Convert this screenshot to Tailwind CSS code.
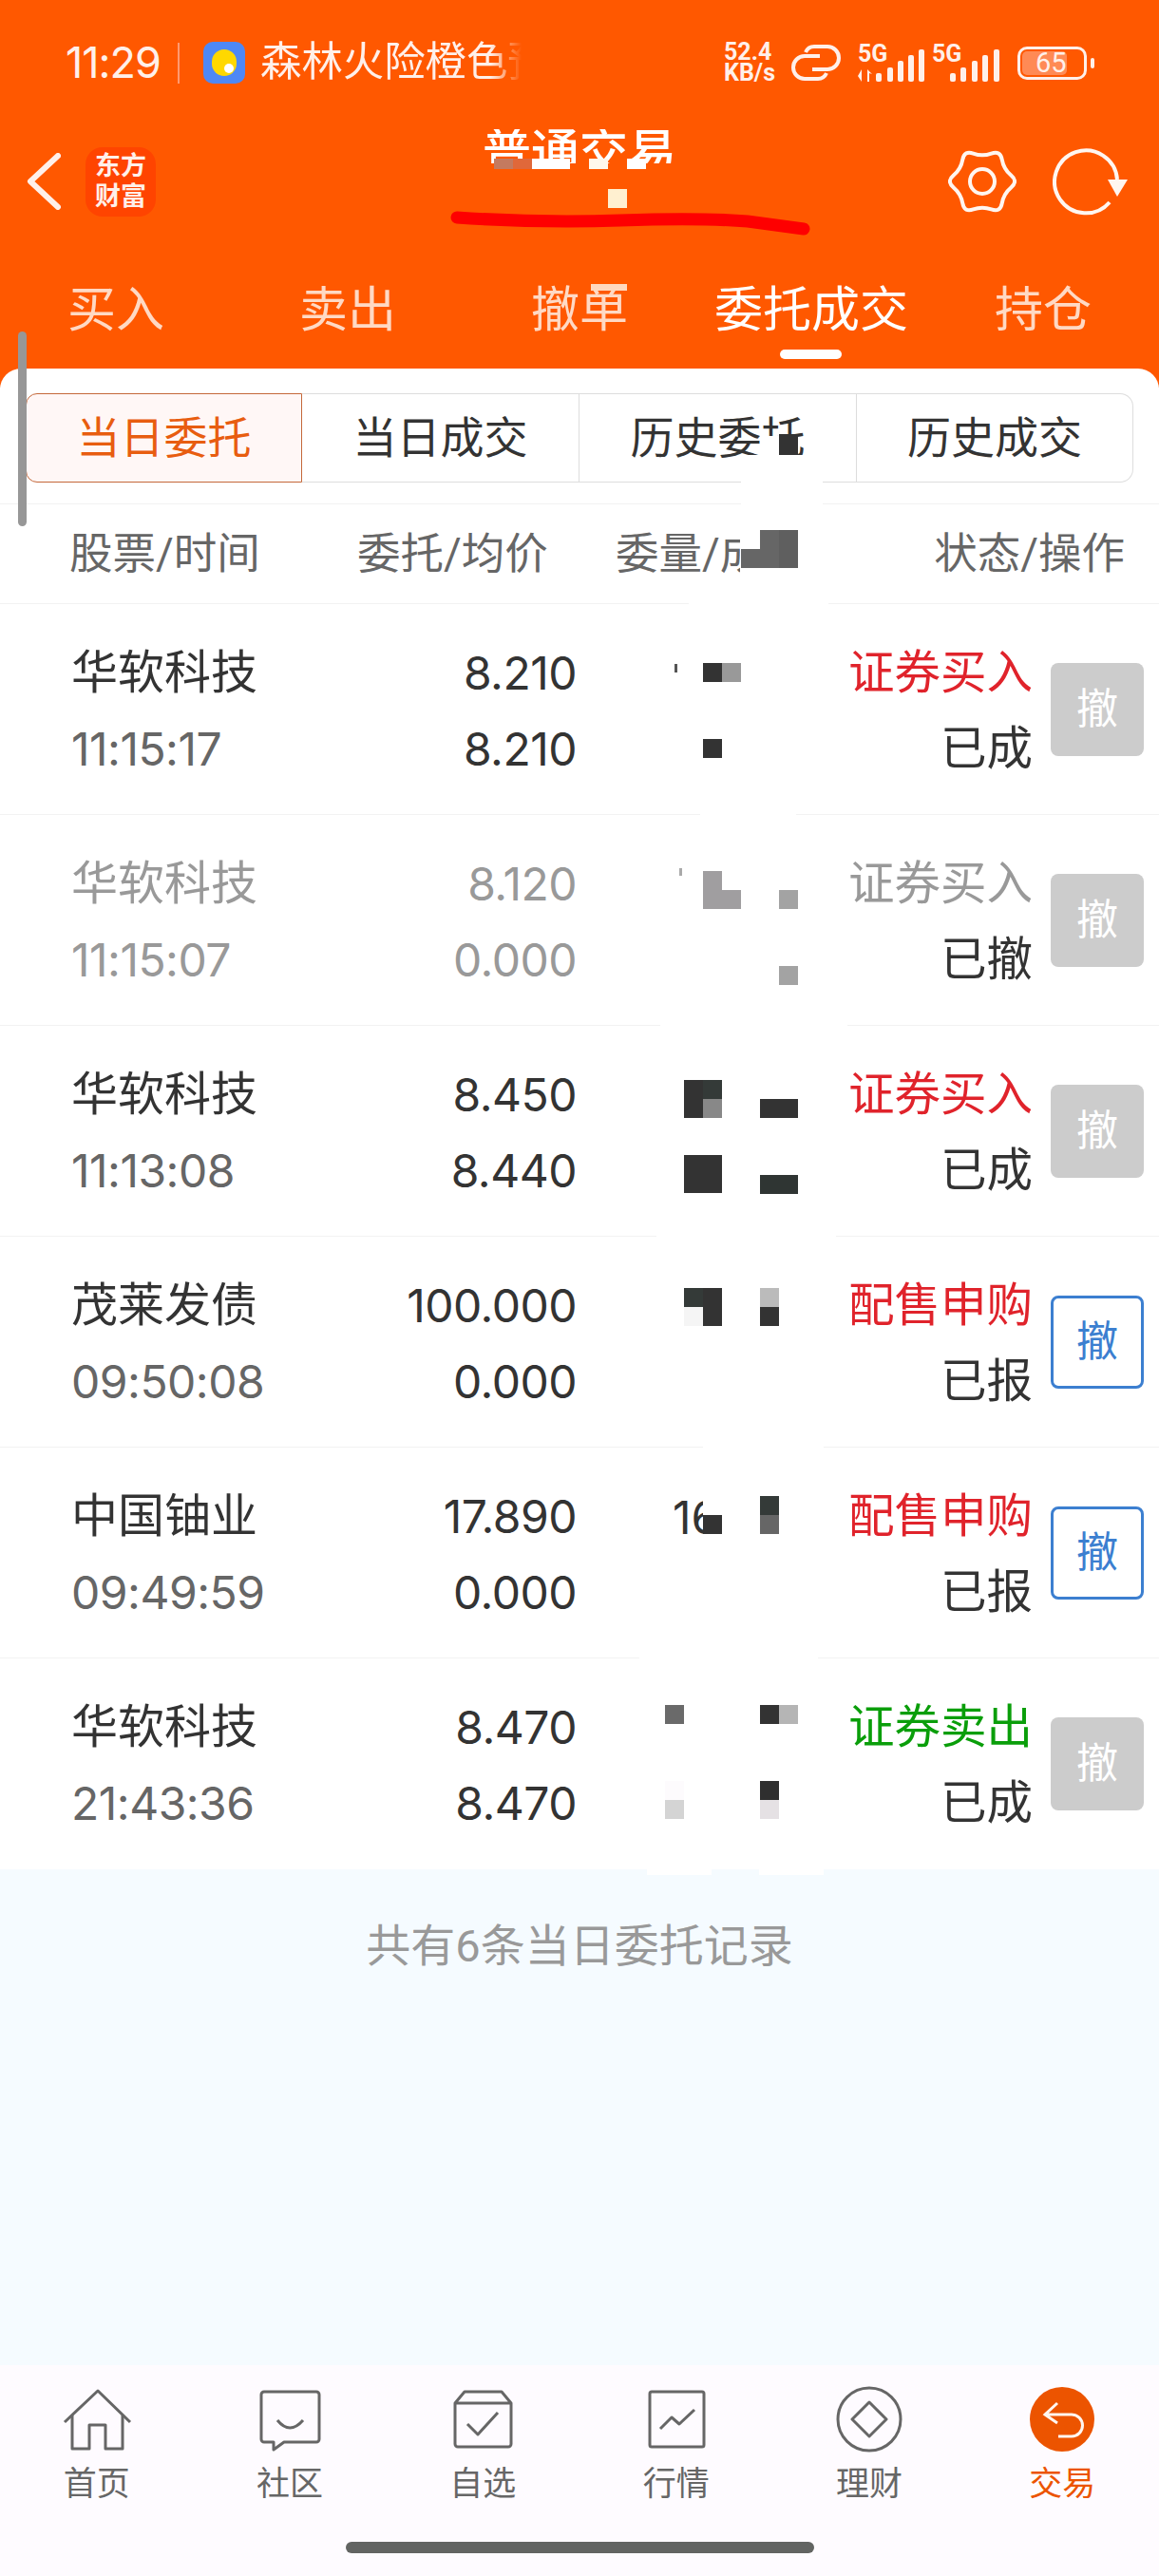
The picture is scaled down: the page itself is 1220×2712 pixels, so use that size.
<!DOCTYPE html>
<html lang="zh-CN">

<head>
  <meta charset="UTF-8">
  <meta name="viewport" content="width=device-width, initial-scale=1.0">
  <title>普通交易</title>
  <script src="https://cdn.jsdelivr.net/npm/@tailwindcss/browser@4"></script>
</head>

<body class="relative w-[1220px] h-[2712px] overflow-hidden flex flex-col bg-[#F5FBFF] text-[#333] font-['Roboto','Noto_Sans_CJK_SC',sans-serif]">
  <!-- Orange header -->
  <header class="h-[408px] flex-shrink-0 flex flex-col bg-[#FF5800] text-white">
    <!-- Status bar -->
    <div class="h-[132px] flex items-center justify-between pl-[69px] pr-[68px]">
      <div class="flex items-center">
        <span class="w-[101px] text-[45px] tracking-[-1px] whitespace-nowrap text-[#FFF0EA] font-['Inter',sans-serif]">11:29</span>
        <span class="ml-[17px] w-[2px] h-[43px] bg-[#FF9A70]"></span>
        <span class="ml-[25px] w-[44px] h-[44px] rounded-[10px] bg-[#4E88F5] flex items-center justify-center relative">
          <span class="w-[26px] h-[28px] rounded-full bg-[#FFD800]"></span>
          <span class="absolute left-[22px] top-[23px] w-[10px] h-[10px] rounded-full bg-white"></span>
        </span>
        <span class="ml-[16px] w-[275px] overflow-hidden whitespace-nowrap text-[43.4px] text-[#FFF0EA] [mask-image:linear-gradient(to_right,black_88%,transparent)]">森林火险橙色预警</span>
      </div>
      <div class="flex items-center">
        <div class="w-[58px] flex flex-col font-bold text-[25px] leading-[22px] text-[#FFF0EA]">
          <span>52.4</span>
          <span>KB/s</span>
        </div>
        <svg class="ml-[13px]" width="52" height="40" viewBox="0 0 52 40" fill="none" stroke="#FFF0EA" stroke-width="4">
          <path d="M30 13H14a10 10 0 0 0 0 24h14a10 10 0 0 0 9-6" />
          <path d="M22 27h16a10 10 0 0 0 0-24H24a10 10 0 0 0-9 6" />
        </svg>
        <svg class="ml-[15px]" width="154" height="44" viewBox="0 0 154 44" fill="#FFF0EA">
          <text x="3" y="21" font-size="25" font-weight="700" font-family="Roboto">5G</text>
          <path d="M7 29v13l-4-6zM13 29v13h2v-9l3 1z" />
          <rect x="22" y="33" width="6" height="9" rx="2" />
          <rect x="34" y="27" width="6" height="15" rx="2" />
          <rect x="45" y="20" width="6" height="22" rx="2" />
          <rect x="56" y="14" width="6" height="28" rx="2" />
          <rect x="67" y="8" width="6" height="34" rx="2" />
          <text x="81" y="21" font-size="25" font-weight="700" font-family="Roboto">5G</text>
          <rect x="100" y="33" width="6" height="9" rx="2" />
          <rect x="111" y="27" width="6" height="15" rx="2" />
          <rect x="123" y="20" width="6" height="22" rx="2" />
          <rect x="134" y="14" width="6" height="28" rx="2" />
          <rect x="146" y="8" width="6" height="34" rx="2" />
        </svg>
        <div class="ml-[17px] relative w-[73px] h-[35px] rounded-[10px] border-[3px] border-[#FFF0EA] flex items-center">
          <span class="absolute left-[2px] top-[2px] w-[47px] h-[25px] rounded-[5px] bg-[#FF8A55]"></span>
          <span class="relative ml-[16px] text-[29px] leading-none text-[#FFF0EA]">65</span>
        </div>
        <span class="ml-[4px] w-[4px] h-[11px] rounded-full bg-[#FFF0EA]"></span>
      </div>
    </div>

    <!-- Title row -->
    <div class="h-[118px] grid grid-cols-[1fr_auto_1fr]">
      <div class="flex items-center pl-[28px]">
        <svg width="36" height="60" viewBox="0 0 36 60" fill="none" stroke="#FFF0EA" stroke-width="6" stroke-linecap="round" stroke-linejoin="round">
          <path d="M33 3L4 30l29 27" />
        </svg>
        <div class="ml-[26px] w-[74px] h-[73px] rounded-[18px] bg-[#FF4400] flex flex-col items-center justify-center text-[27px] leading-[32px] font-bold text-[#FFF0EA]">
          <span>东方</span>
          <span>财富</span>
        </div>
      </div>
      <div class="mt-[4px] h-[36px] overflow-hidden text-[51px] leading-[50px] font-medium whitespace-nowrap">普通交易</div>
      <div class="flex items-center justify-end pr-[30px]">
        <svg width="72" height="72" viewBox="0 0 72 72" fill="none" stroke="#FFF6F0" stroke-width="4">
          <path d="M66.25 29.5Q74 36 66.25 42.5Q58.5 49 56.75 58.95Q55 68.9 45.5 65.45Q36 62 26.5 65.45Q17 68.9 15.25 58.95Q13.5 49 5.75 42.5Q-2 36 5.75 29.5Q13.5 23 15.25 13.05Q17 3.1 26.5 6.55Q36 10 45.5 6.55Q55 3.1 56.75 13.05Q58.5 23 66.25 29.5Z" />
          <circle cx="36" cy="36" r="13" />
        </svg>
        <svg class="ml-[38px]" width="82" height="72" viewBox="0 0 82 72" fill="none">
          <path d="M60 58A33 33 0 1 1 68 34" stroke="#FFF6F0" stroke-width="4" />
          <path d="M58 34H79L68 52Z" fill="#FFF6F0" />
        </svg>
      </div>
    </div>

    <!-- Trade tabs -->
    <nav class="grid grid-cols-5 pt-[42px] text-[51px] leading-[70px] text-center text-[#FFD9C4]">
      <span>买入</span>
      <span>卖出</span>
      <span>撤单</span>
      <span class="relative text-white">委托成交
        <span class="absolute left-[89px] top-[76px] w-[65px] h-[10px] rounded-full bg-white"></span>
      </span>
      <span>持仓</span>
    </nav>
  </header>

  <!-- Main content -->
  <main class="flex-1 -mt-[20px] relative flex flex-col">
    <div class="rounded-t-[22px] bg-white pt-[26px]">
      <div class="ml-[27px] w-[1166px] h-[91px] grid grid-cols-[291px_292px_292px_291px] text-[46px] text-center leading-[92px]">
        <div class="rounded-l-[12px] border-[1.5px] border-[#C4683A] bg-[#FFF7F6] text-[#E85D10]">当日委托</div>
        <div class="border-y-[1.5px] border-r-[1.5px] border-[#DDD]">当日成交</div>
        <div class="border-y-[1.5px] border-r-[1.5px] border-[#DDD]">历史委托</div>
        <div class="rounded-r-[14px] border-y-[1.5px] border-r-[1.5px] border-[#DDD]">历史成交</div>
      </div>
      <!-- Column headings -->
      <div class="mt-[25px] h-[106px] flex items-center border-y-[1.5px] border-[#F2F2F2] text-[45.5px] leading-[60px] text-[#666]">
        <span class="ml-[73px] mt-[2px] w-[303px]">股票/时间</span>
        <span class="w-[272px] mt-[2px]">委托/均价</span>
        <span class="w-[131px] mt-[2px] overflow-hidden whitespace-nowrap">委量/成交</span>
        <span class="ml-auto mt-[2px] mr-[36px]">状态/操作</span>
      </div>

      <!-- Orders -->
      <div class="h-[222px] flex items-center pl-[75px] pr-[16px] border-b-[1.5px] border-[#F2F2F2] text-[49px] leading-[80px]">
        <div class="w-[300px] mt-[4px]">华软科技<div class="text-[48px] tracking-[-0.5px] text-[#666] font-['Inter',sans-serif]">11:15:17</div></div>
        <div class="w-[232px] mt-[4px] text-right text-[48px] tracking-[-0.5px] font-['Inter',sans-serif]">8.210<div>8.210</div></div>
        <div class="ml-auto mt-[4px] text-right text-[48.5px]"><span class="text-[#E0232B]">证券买入</span><div>已成</div></div>
        <button class="ml-[19px] w-[98px] h-[98px] rounded-[8px] bg-[#CCC] text-white text-[44px]">撤</button>
      </div>
      <div class="h-[222px] flex items-center pl-[75px] pr-[16px] border-b-[1.5px] border-[#F2F2F2] text-[49px] leading-[80px] text-[#999]">
        <div class="w-[300px] mt-[4px]">华软科技<div class="text-[48px] tracking-[-0.5px] font-['Inter',sans-serif]">11:15:07</div></div>
        <div class="w-[232px] mt-[4px] text-right text-[48px] tracking-[-0.5px] font-['Inter',sans-serif]">8.120<div>0.000</div></div>
        <div class="ml-auto mt-[4px] text-right text-[48.5px]"><span>证券买入</span><div class="text-[#333]">已撤</div></div>
        <button class="ml-[19px] w-[98px] h-[98px] rounded-[8px] bg-[#CCC] text-white text-[44px]">撤</button>
      </div>
      <div class="h-[222px] flex items-center pl-[75px] pr-[16px] border-b-[1.5px] border-[#F2F2F2] text-[49px] leading-[80px]">
        <div class="w-[300px] mt-[4px]">华软科技<div class="text-[48px] tracking-[-0.5px] text-[#666] font-['Inter',sans-serif]">11:13:08</div></div>
        <div class="w-[232px] mt-[4px] text-right text-[48px] tracking-[-0.5px] font-['Inter',sans-serif]">8.450<div>8.440</div></div>
        <div class="ml-auto mt-[4px] text-right text-[48.5px]"><span class="text-[#E0232B]">证券买入</span><div>已成</div></div>
        <button class="ml-[19px] w-[98px] h-[98px] rounded-[8px] bg-[#CCC] text-white text-[44px]">撤</button>
      </div>
      <div class="h-[222px] flex items-center pl-[75px] pr-[16px] border-b-[1.5px] border-[#F2F2F2] text-[49px] leading-[80px]">
        <div class="w-[300px] mt-[4px]">茂莱发债<div class="text-[48px] tracking-[-0.5px] text-[#666] font-['Inter',sans-serif]">09:50:08</div></div>
        <div class="w-[232px] mt-[4px] text-right text-[48px] tracking-[-0.5px] font-['Inter',sans-serif]">100.000<div>0.000</div></div>
        <div class="ml-auto mt-[4px] text-right text-[48.5px]"><span class="text-[#E0232B]">配售申购</span><div>已报</div></div>
        <button class="ml-[19px] w-[98px] h-[98px] rounded-[8px] border-[3px] border-[#3C7FD0] text-[#3C7FD0] text-[44px]">撤</button>
      </div>
      <div class="h-[222px] flex items-center pl-[75px] pr-[16px] border-b-[1.5px] border-[#F2F2F2] text-[49px] leading-[80px]">
        <div class="w-[300px] mt-[4px]">中国铀业<div class="text-[48px] tracking-[-0.5px] text-[#666] font-['Inter',sans-serif]">09:49:59</div></div>
        <div class="w-[232px] mt-[4px] text-right text-[48px] tracking-[-0.5px] font-['Inter',sans-serif]">17.890<div>0.000</div></div>
        <div class="ml-auto mt-[4px] text-right text-[48.5px]"><span class="text-[#E0232B]">配售申购</span><div>已报</div></div>
        <button class="ml-[19px] w-[98px] h-[98px] rounded-[8px] border-[3px] border-[#3C7FD0] text-[#3C7FD0] text-[44px]">撤</button>
      </div>
      <div class="h-[222px] flex items-center pl-[75px] pr-[16px] text-[49px] leading-[80px]">
        <div class="w-[300px] mt-[4px]">华软科技<div class="text-[48px] tracking-[-0.5px] text-[#666] font-['Inter',sans-serif]">21:43:36</div></div>
        <div class="w-[232px] mt-[4px] text-right text-[48px] tracking-[-0.5px] font-['Inter',sans-serif]">8.470<div>8.470</div></div>
        <div class="ml-auto mt-[4px] text-right text-[48.5px]"><span class="text-[#0A9E0A]">证券卖出</span><div>已成</div></div>
        <button class="ml-[19px] w-[98px] h-[98px] rounded-[8px] bg-[#CCC] text-white text-[44px]">撤</button>
      </div>
    </div>
    <p class="mt-[51px] text-center text-[47px] leading-[60px] text-[#999]">共有6条当日委托记录</p>
  </main>

  <!-- Bottom tab bar -->
  <footer class="h-[222px] flex-shrink-0 bg-[#FEFBFF] pt-[20px]">
    <div class="grid grid-cols-6 text-center text-[35px] leading-[40px] text-[#666]">
      <div class="flex flex-col items-center">
        <svg width="80" height="72" viewBox="0 0 80 72" fill="none" stroke="#666" stroke-width="3" stroke-linejoin="round">
          <path d="M6 40L41 7L75 40" />
          <path d="M14 33V68H32V43H49V68H67V33" />
        </svg>
        <span class="mt-[14px]">首页</span>
      </div>
      <div class="flex flex-col items-center">
        <svg width="80" height="72" viewBox="0 0 80 72" fill="none" stroke="#666" stroke-width="3" stroke-linejoin="round">
          <path d="M13 8H68a3 3 0 0 1 3 3V58a3 3 0 0 1-3 3H34L23 69V61H13a3 3 0 0 1-3-3V11a3 3 0 0 1 3-3Z" />
          <path d="M27 38Q40 54 54 38" />
        </svg>
        <span class="mt-[14px]">社区</span>
      </div>
      <div class="flex flex-col items-center">
        <svg width="80" height="72" viewBox="0 0 80 72" fill="none" stroke="#666" stroke-width="3" stroke-linejoin="round">
          <path d="M11 20L21 8H60L70 20V63a3 3 0 0 1-3 3H14a3 3 0 0 1-3-3ZM11 20H70" />
          <path d="M24 42L35 53L56 30" />
        </svg>
        <span class="mt-[14px]">自选</span>
      </div>
      <div class="flex flex-col items-center">
        <svg width="80" height="72" viewBox="0 0 80 72" fill="none" stroke="#666" stroke-width="3" stroke-linejoin="round">
          <rect x="12" y="8" width="57" height="58" rx="2" />
          <path d="M23 47L35 35L43 42L59 27" />
        </svg>
        <span class="mt-[14px]">行情</span>
      </div>
      <div class="flex flex-col items-center">
        <svg width="80" height="72" viewBox="0 0 80 72" fill="none" stroke="#666" stroke-width="3" stroke-linejoin="round">
          <circle cx="40" cy="37" r="33" />
          <path d="M40 19L58 37L40 55L22 37Z" />
        </svg>
        <span class="mt-[14px]">理财</span>
      </div>
      <div class="flex flex-col items-center text-[#EC5400]">
        <svg width="80" height="72" viewBox="0 0 80 72" fill="none">
          <circle cx="40" cy="37" r="34" fill="#EC5400" />
          <path d="M35 20L22 32L35 41M22 32H50A11.5 11.5 0 0 1 50 55H36" stroke="#FFF6F0" stroke-width="3" />
        </svg>
        <span class="mt-[14px]">交易</span>
      </div>
    </div>
    <div class="mt-[40px] mx-auto w-[493px] h-[12px] rounded-full bg-[#626462]"></div>
  </footer>

  <!-- Scroll indicator, marker stroke and mosaic that lie over the page -->
  <div class="absolute left-[19px] top-[349px] w-[9px] h-[205px] rounded-full bg-[#979797]"></div>
  <svg class="absolute left-0 top-0" width="1220" height="300" fill="none">
    <path d="M481 229Q570 235 653 232T787 233L846 241" stroke="#FE0000" stroke-width="13" stroke-linecap="round" />
  </svg>
  <div id="mosaic" class="absolute inset-0 pointer-events-none">
    <span class="absolute left-[708px] top-[1568px] w-[32px] h-[47px] overflow-hidden text-[48px] leading-[60px] font-['Inter',sans-serif]">16</span>
  </div>

  <script>
    // [x, y, width, height, colour]
    const cells = [
      // title and tab
      [520, 167, 20, 11, '#C47A5F'], [540, 167, 20, 11, '#E0683A'], [560, 167, 40, 11, '#FFFFFF'],
      [620, 167, 20, 11, '#FFF8EC'], [660, 167, 20, 11, '#FFFFFF'], [640, 199, 20, 20, '#FFF0D0'],
      [622, 299, 38, 7, '#FFD9BF'],
      // gaps left in the rules by the white patch
      [780, 479, 86, 53, '#FFFFFF'], [725, 632, 147, 5, '#FFFFFF'], [737, 855, 101, 5, '#FFFFFF'],
      [695, 1077, 197, 5, '#FFFFFF'], [691, 1299, 189, 5, '#FFFFFF'], [740, 1521, 127, 5, '#FFFFFF'],
      [673, 1743, 188, 5, '#FFFFFF'], [681, 1966, 68, 8, '#FFFFFF'], [799, 1966, 68, 8, '#FFFFFF'],
      // segment and heading
      [800, 459, 20, 20, '#FFFFFF'], [820, 457, 20, 22, '#333333'],
      [800, 558, 20, 40, '#666666'], [820, 558, 20, 40, '#5F5F5F'], [780, 578, 20, 20, '#666666'],
      // row 1
      [740, 698, 20, 20, '#333333'], [760, 698, 20, 20, '#999999'], [740, 778, 20, 20, '#333333'], [710, 699, 3, 9, '#555555'],
      // row 2
      [740, 917, 20, 40, '#A09EA0'], [760, 937, 20, 20, '#A09EA0'], [820, 937, 20, 20, '#A3A3A3'], [820, 1017, 20, 20, '#A3A3A3'], [715, 914, 3, 8, '#AAAAAA'],
      // row 3
      [720, 1137, 20, 40, '#333333'], [740, 1137, 20, 20, '#343A38'], [740, 1157, 20, 20, '#888888'],
      [720, 1216, 40, 40, '#333333'], [800, 1157, 40, 20, '#333333'], [800, 1237, 40, 20, '#2F3533'],
      // row 4
      [720, 1356, 20, 20, '#343A38'], [740, 1356, 20, 40, '#333333'], [720, 1376, 20, 20, '#F5F5F5'],
      [800, 1356, 20, 20, '#BBBBBB'], [800, 1376, 20, 20, '#333333'],
      // row 5
      [740, 1595, 20, 20, '#333333'], [800, 1575, 20, 20, '#343A38'], [800, 1595, 20, 20, '#666666'],
      // row 6
      [700, 1795, 20, 20, '#6A6A6A'], [800, 1795, 20, 20, '#333333'], [820, 1795, 20, 20, '#B5B5B5'],
      [700, 1875, 20, 20, '#FDFBFD'], [700, 1895, 20, 20, '#D4D4D4'], [800, 1875, 20, 20, '#2F2F2F'], [800, 1895, 20, 20, '#E5E1E4'],
    ];

    const mosaic = document.getElementById('mosaic');
    cells.forEach(([x, y, w, h, colour]) => {
      const cell = document.createElement('span');
      cell.className = 'absolute';
      cell.style.cssText = `left:${x}px;top:${y}px;width:${w}px;height:${h}px;background:${colour}`;
      mosaic.appendChild(cell);
    });
  </script>
</body>

</html>
